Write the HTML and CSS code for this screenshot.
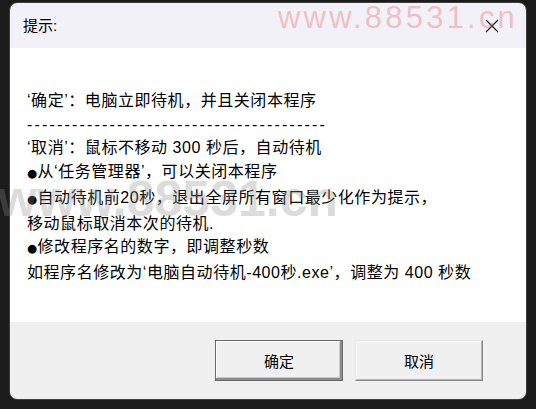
FILE: index.html
```html
<!DOCTYPE html>
<html lang="zh-CN">
<head>
<meta charset="utf-8">
<title>提示</title>
<link rel="stylesheet" href="styles.css">
</head>
<body>
<div class="desktop">
  <div class="dialog">
    <div class="titlebar">
      <span class="title">提示:</span>
      <svg class="close" width="14" height="14" viewBox="0 0 14 14"><path d="M1 1 L13 13 M13 1 L1 13" stroke="#111" stroke-width="1.1" fill="none"/></svg>
    </div>
    <div class="content">
      <p>‘确定’：电脑立即待机，并且关闭本程序</p>
      <p class="dashes">----------------------------------------</p>
      <p>‘取消’：鼠标不移动 300 秒后，自动待机</p>
      <p><span class="dot">●</span>从‘任务管理器’，可以关闭本程序</p>
      <p><span class="dot">●</span>自动待机前20秒，退出全屏所有窗口最少化作为提示，</p>
      <p>移动鼠标取消本次的待机.</p>
      <p><span class="dot">●</span>修改程序名的数字，即调整秒数</p>
      <p>如程序名修改为‘电脑自动待机-400秒.exe’，调整为 400 秒数</p>
    </div>
    <div class="footer">
      <button class="btn btn-default">确定</button>
      <button class="btn">取消</button>
    </div>
  </div>
  <div class="wm wm-pink">www.88531.cn</div>
  <div class="wm wm-gray">www.88531.cn</div>
</div>
</body>
</html>
```

FILE: styles.css
```css
html, body {
  margin: 0;
  padding: 0;
  background: #1b1b1b;
}
.desktop {
  position: relative;
  width: 536px;
  height: 409px;
  overflow: hidden;
  padding-top: 2px;
  box-sizing: border-box;
}
.dialog {
  margin-left: 9px;
  width: 518px;
  height: 398px;
  border-radius: 8px;
  border: 1px solid #3e3e3e;
  box-sizing: border-box;
  overflow: hidden;
  display: flex;
  flex-direction: column;
  font-family: "Liberation Sans", "Noto Sans CJK SC", sans-serif;
  color: #000;
}
.titlebar {
  height: 45px;
  flex: none;
  background: #f1f1f7;
  display: flex;
  align-items: center;
  justify-content: space-between;
  padding: 0 27px 0 13px;
}
.title {
  font-size: 15px;
  margin-top: -2px;
}
.close {
  display: block;
  margin-top: 0;
}
.content {
  flex: 1;
  background: #fff;
  padding: 41px 0 0 17px;
  font-size: 16px;
  letter-spacing: 0.55px;
  line-height: 23.7px;
}
.content p {
  margin: 0;
  white-space: nowrap;
}
.content .dashes {
  letter-spacing: 2.17px;
}
.dot {
  font-family: "DejaVu Sans", sans-serif;
  font-size: 11.5px;
  letter-spacing: 0.5px;
}
.footer {
  height: 77px;
  flex: none;
  background: #f0f0f0;
  display: flex;
  justify-content: flex-end;
  align-items: flex-start;
  gap: 12px;
  padding: 18px 43px 0 0;
  box-sizing: border-box;
}
.btn {
  width: 128px;
  height: 41px;
  background: #f0f0f0;
  border: 1px solid #a0a0a0;
  border-color: #e6e6e6 #8a8a8a #8a8a8a #e6e6e6;
  box-shadow: inset -1px -1px 0 #b4b4b4, inset 1px 1px 0 #ffffff;
  font-family: "Noto Sans CJK SC", sans-serif;
  font-size: 15px;
  color: #000;
  padding: 0;
}
.btn-default {
  border: 1px solid #6a6a6a;
  box-shadow: inset -2px -2px 0 #8c8c8c, inset 1px 1px 0 #ffffff, inset -3px -3px 0 #c8c8c8;
}
.wm {
  position: absolute;
  font-family: "Liberation Sans", Arial, sans-serif;
  white-space: nowrap;
  pointer-events: none;
}
.wm-pink {
  left: 278px;
  top: 0;
  font-size: 31px;
  letter-spacing: 3.2px;
  color: rgba(240, 120, 125, 0.42);
}
.wm-gray {
  left: -2px;
  top: 170px;
  font-size: 50px;
  font-weight: bold;
  color: rgba(140, 140, 140, 0.3);
}
```
